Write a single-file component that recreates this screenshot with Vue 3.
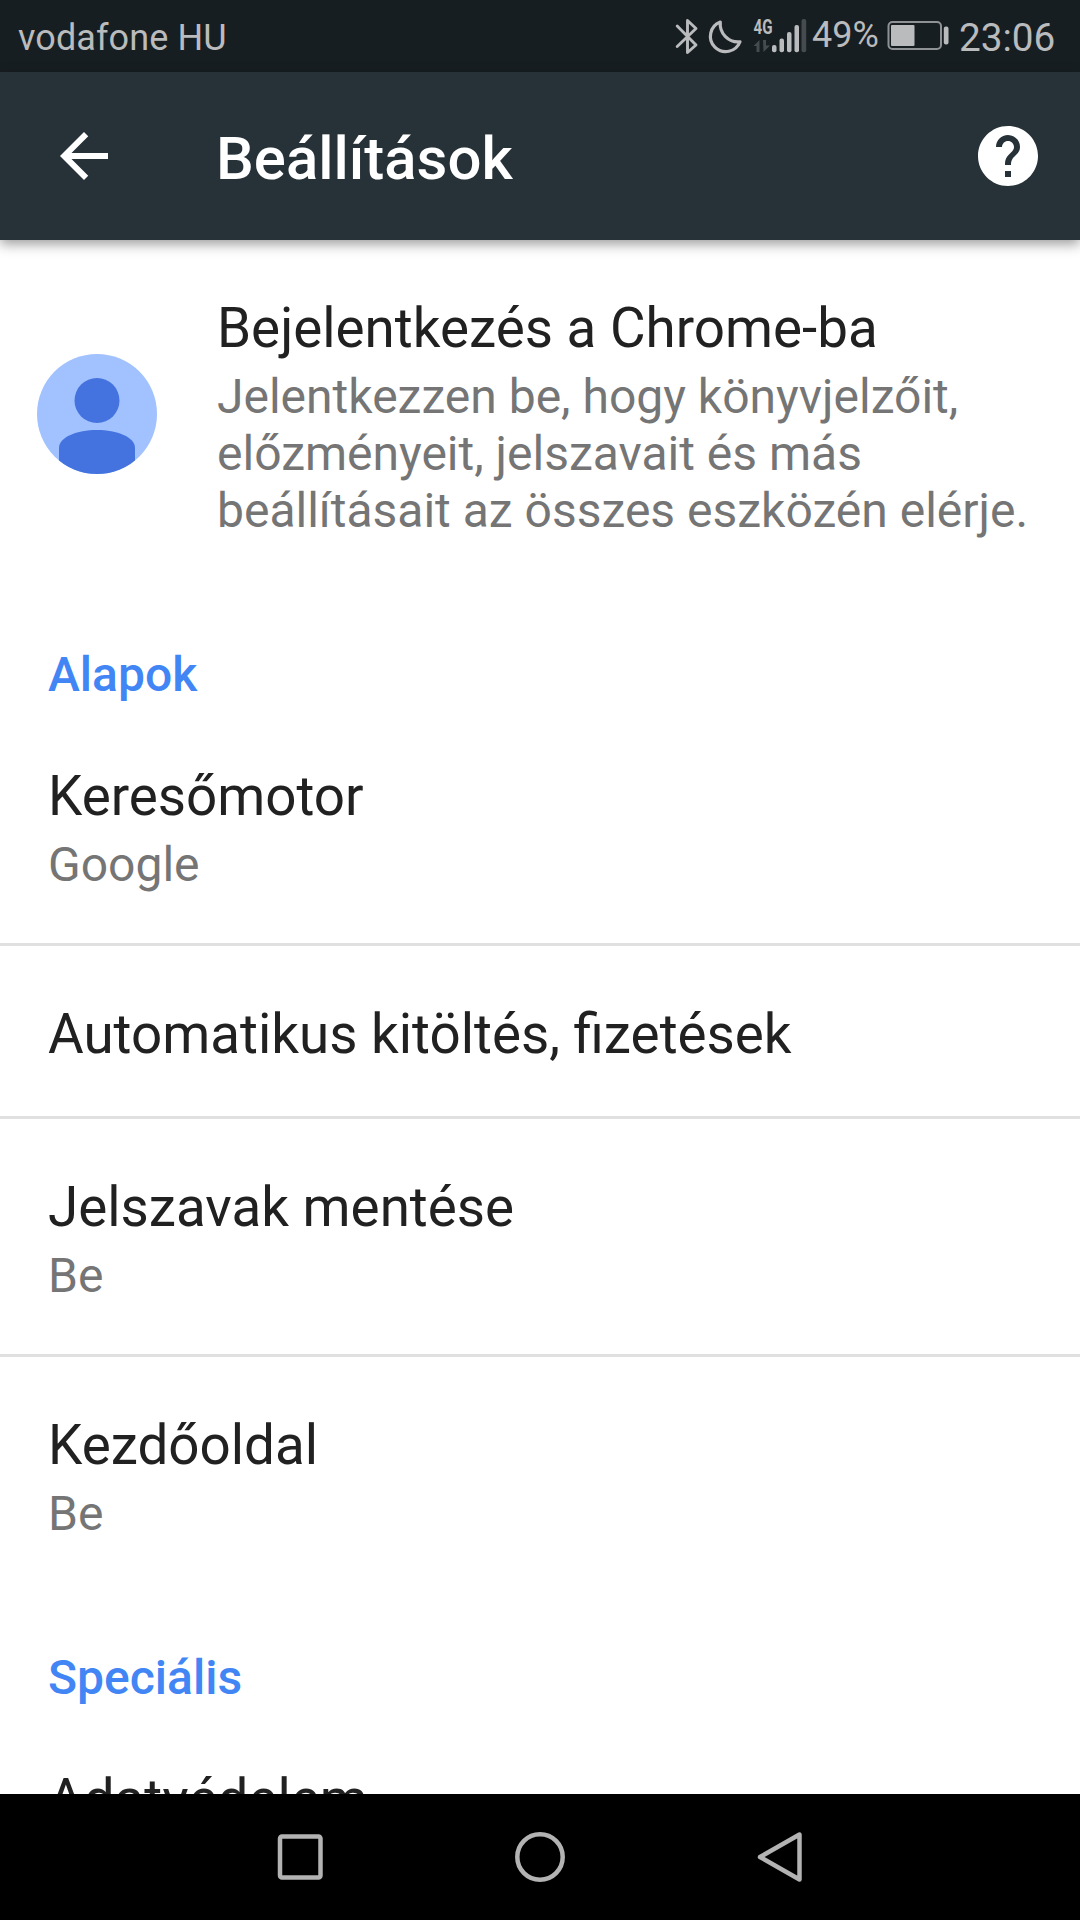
<script setup>
const basics = [
  { title: 'Keresőmotor', value: 'Google' },
  { title: 'Automatikus kitöltés, fizetések' },
  { title: 'Jelszavak mentése', value: 'Be' },
  { title: 'Kezdőoldal', value: 'Be' },
]
const advanced = [{ title: 'Adatvédelem' }]
const bars = [
  { x: 102, y: 45 },
  { x: 109.5, y: 38.5 },
  { x: 117, y: 32 },
  { x: 124.5, y: 25 },
]
</script>

<template>
  <div class="screen">
    <div class="status">
      <span class="carrier">vodafone HU</span>
      <svg class="radios" width="139" height="72" viewBox="0 0 139 72">
        <path class="line" d="M7.2 26 L26 45 L17.5 52.5 V20.5 L26 28.5 L7.2 46.5" />
        <path class="line moon" d="M50.300 22 A15.300 15.300 0 1 0 70 41.800 A18 18 0 0 1 50.300 22 Z" />
        <text class="net" x="83.500" y="33.500" textLength="19" lengthAdjust="spacingAndGlyphs">4G</text>
        <g class="dim">
          <path d="M83.500 46 L89.500 40 V52 H86.500 V46 Z M93 40 H96 V45.500 H100 L93.500 52 Z" />
          <rect x="131.500" y="19" width="4.700" height="33.300" rx="2" />
        </g>
        <rect v-for="b in bars" :key="b.x" class="bar" :x="b.x" :y="b.y" width="4.500" :height="52.300 - b.y" rx="2" />
      </svg>
      <span class="percent">49%</span>
      <svg class="battery" width="66" height="72" viewBox="0 0 66 72">
        <rect x="2.500" y="22" width="52.500" height="27" rx="4" fill="none" stroke="#8e9294" stroke-width="2" />
        <rect class="bar" x="5" y="25" width="23.500" height="21" rx="1" />
        <rect class="bar" x="57.800" y="26.500" width="4.700" height="18" rx="2" />
      </svg>
      <span class="clock">23:06</span>
    </div>

    <header class="toolbar">
      <svg class="back" width="48" height="48" viewBox="4 4 16 16">
        <path fill="#fff" d="M20 11H7.830l5.590-5.590L12 4l-8 8 8 8 1.410-1.410L7.830 13H20v-2z" />
      </svg>
      <h1>Beállítások</h1>
      <svg class="help" width="60" height="60" viewBox="2 2 20 20">
        <path fill="#fff" d="M12 2C6.480 2 2 6.480 2 12s4.480 10 10 10 10-4.480 10-10S17.520 2 12 2zm1 17h-2v-2h2v2zm2.070-7.750l-.9.920C13.450 12.900 13 13.500 13 15h-2v-.5c0-1.100.45-2.100 1.170-2.830l1.240-1.260c.37-.36.590-.86.590-1.410 0-1.100-.9-2-2-2s-2 .9-2 2H8c0-2.210 1.790-4 4-4s4 1.790 4 4c0 .88-.36 1.680-.93 2.250z" />
      </svg>
    </header>

    <main class="content">
      <section class="signin">
        <svg class="avatar" width="120" height="120" viewBox="0 0 120 120">
          <defs><clipPath id="disc"><circle cx="60" cy="60" r="60" /></clipPath></defs>
          <circle cx="60" cy="60" r="60" fill="#a1c2fe" />
          <g clip-path="url(#disc)" fill="#4473df">
            <circle cx="60" cy="46.500" r="22.500" />
            <path d="M22 120 V94 C22 83 40 76 60 76 S98 83 98 94 V120 Z" />
          </g>
        </svg>
        <div>
          <div class="title">Bejelentkezés a Chrome-ba</div>
          <div class="value">Jelentkezzen be, hogy könyvjelzőit,<br>előzményeit, jelszavait és más<br>beállításait az összes eszközén elérje.</div>
        </div>
      </section>

      <h2>Alapok</h2>
      <div v-for="item in basics" :key="item.title" class="row" :class="{ single: !item.value }">
        <div class="title">{{ item.title }}</div>
        <div v-if="item.value" class="value">{{ item.value }}</div>
      </div>

      <h2 class="second">Speciális</h2>
      <div v-for="item in advanced" :key="item.title" class="row single">
        <div class="title">{{ item.title }}</div>
      </div>
    </main>

    <nav class="nav">
      <svg width="60" height="60" viewBox="0 0 60 60"><rect x="10" y="9.500" width="40.500" height="41" rx="2" /></svg>
      <svg width="60" height="60" viewBox="0 0 60 60"><circle cx="30" cy="30" r="22.700" /></svg>
      <svg width="60" height="60" viewBox="0 0 60 60"><path d="M49.500 7.500 V52.500 L10 30 Z" /></svg>
    </nav>
  </div>
</template>

<style>
body { margin: 0; background: #fff; }
</style>

<style scoped>
.screen {
  width: 1080px;
  height: 1920px;
  display: flex;
  flex-direction: column;
  overflow: hidden;
  background: #fff;
  font-family: Roboto, sans-serif;
}
.status {
  flex: none;
  height: 72px;
  display: flex;
  background: #171e22;
  color: #b9bbbc;
  font-size: 36px;
  line-height: 72px;
  white-space: nowrap;
}
.status svg { flex: none; }
.carrier { width: 652px; padding-left: 18px; letter-spacing: 0.1px; line-height: 77px; }
.percent { width: 74px; padding-left: 3px; line-height: 71px; }
.clock { padding-left: 7px; font-size: 38.7px; line-height: 75px; }
.line { fill: none; stroke: #b9bbbc; stroke-width: 2.9; stroke-linejoin: round; stroke-linecap: round; }
.moon { stroke-width: 3.2; }
.bar { fill: #b9bbbc; }
.dim { fill: #454b4e; }
.net { fill: #b9bbbc; font-size: 20px; font-weight: 700; }
.toolbar {
  flex: none;
  height: 168px;
  display: flex;
  align-items: center;
  box-sizing: border-box;
  padding: 0 42px 0 60px;
  background: #263238;
  color: #fff;
  box-shadow: 0 4px 12px rgba(0, 0, 0, 0.4);
  z-index: 1;
}
h1 { flex: 1; margin: 0; padding: 6px 0 0 108px; font-size: 59.9px; font-weight: 500; line-height: 72px; }
.content { flex: 1; min-height: 0; overflow: hidden; }
.signin { display: flex; align-items: flex-start; gap: 60px; height: 349px; box-sizing: border-box; padding: 56px 0 0 37px; }
.avatar { flex: none; margin-top: 58px; }
.title { font-size: 54.75px; line-height: 64px; color: #212121; white-space: nowrap; }
.value { margin-top: 8px; font-size: 48px; line-height: 57px; color: #757575; white-space: nowrap; }
h2 { height: 57px; margin: 57px 0 0; padding: 0 48px 5px; font-size: 48px; font-weight: 500; line-height: 57px; color: #4285f4; }
h2.second { margin-top: 54px; }
.row { height: 238px; box-sizing: border-box; padding: 56px 48px 0; border-bottom: 3px solid #e0e0e0; }
.row.single { height: 173px; }
.row:has(+ .second) { border: 0; }
.nav { flex: none; height: 126px; display: flex; justify-content: center; align-items: center; gap: 180px; background: #000; }
.nav svg { fill: none; stroke: #b3b3b3; stroke-width: 4.500; stroke-linejoin: round; }
</style>
